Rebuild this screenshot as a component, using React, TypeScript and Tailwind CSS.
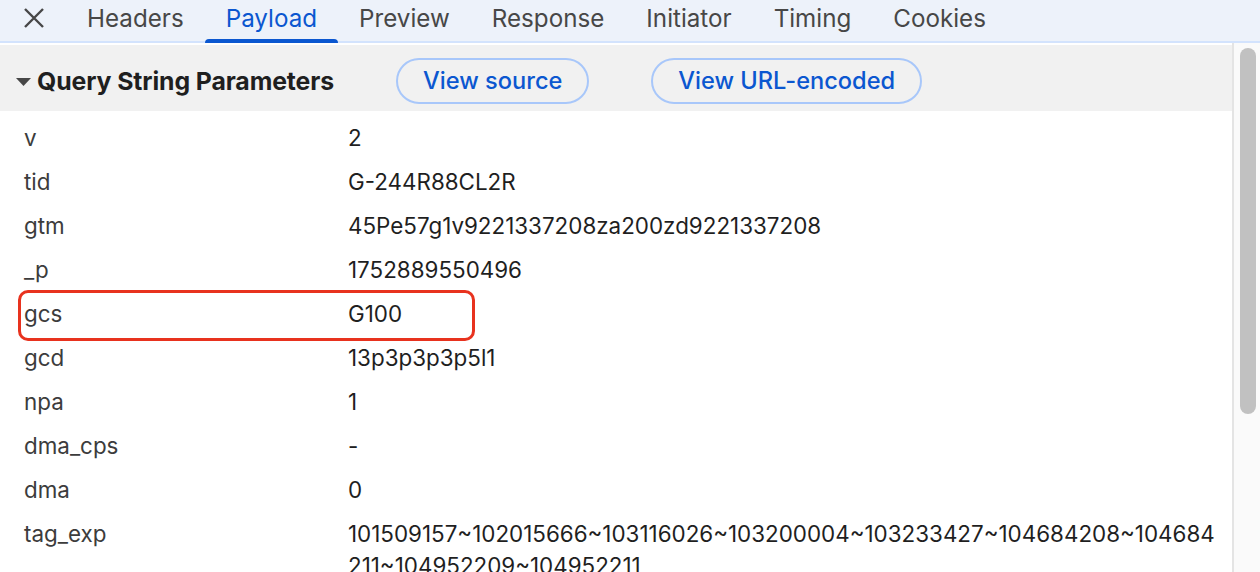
import React from "react";

const tabs = ["Headers", "Payload", "Preview", "Response", "Initiator", "Timing", "Cookies"];

const rows: [string, string][] = [
  ["v", "2"],
  ["tid", "G-244R88CL2R"],
  ["gtm", "45Pe57g1v9221337208za200zd9221337208"],
  ["_p", "1752889550496"],
  ["gcs", "G100"],
  ["gcd", "13p3p3p3p5l1"],
  ["npa", "1"],
  ["dma_cps", "-"],
  ["dma", "0"],
  ["tag_exp", "101509157~102015666~103116026~103200004~103233427~104684208~104684211~104952209~104952211"],
];

export default function App() {
  return (
    <div
      className="relative w-[1260px] h-[572px] overflow-hidden bg-white"
      style={{ fontFamily: "Inter, 'Noto Sans', 'Liberation Sans', sans-serif" }}
    >
      {/* Tab bar */}
      <div className="flex h-[43px] bg-[#edf2fa] border-b-2 border-[#d3e3fd]">
        <div className="w-[66px] flex items-start justify-center pt-[5px] pr-[1px]">
          <svg width="26" height="26" viewBox="0 0 26 26" className="ml-[2px]">
            <path d="M4 4 L22 22 M22 4 L4 22" stroke="#474747" strokeWidth="2.4" strokeLinecap="butt" />
          </svg>
        </div>
        {tabs.map((t) => {
          const active = t === "Payload";
          return (
            <div
              key={t}
              className={`relative px-[21px] h-[41px] flex items-start pt-[3px] text-[24.2px] leading-[32px] ${
                active ? "text-[#0b57d0]" : "text-[#474747]"
              }`}
            >
              {t}
              {active && (
                <div className="absolute left-0 right-0 bottom-[-2px] h-[4px] bg-[#0b57d0] rounded-t-[4px]" />
              )}
            </div>
          );
        })}
      </div>

      <div className="flex h-[529px]">
        {/* Main content */}
        <div className="flex-1 flex flex-col min-w-0">
          <div className="mt-[2px] h-[66px] pt-[6px] bg-[#f1f1f1] flex items-center shrink-0">
            <svg width="16" height="10" viewBox="0 0 16 10" className="ml-[16px] mr-[5px] mt-[1px]">
              <path d="M0 1 L15 1 L7.5 9 Z" fill="#474747" />
            </svg>
            <div className="text-[24.8px] font-bold text-[#1f1f1f] leading-[30px] tracking-[-0.1px]">Query String Parameters</div>
            <div className="ml-[62px] h-[46px] px-[25px] rounded-full border-2 border-[#a8c7fa] flex items-center text-[23.6px] text-[#0b57d0] font-medium">
              View source
            </div>
            <div className="ml-[62px] h-[46px] px-[25px] rounded-full border-2 border-[#a8c7fa] flex items-center text-[23.6px] text-[#0b57d0] font-medium">
              View URL-encoded
            </div>
          </div>
          <div className="pt-[5px]">
            {rows.map(([k, v]) => (
              <div key={k} className="flex py-[6px] text-[22.4px] leading-[32px]">
                <div className="w-[348px] pl-[24px] shrink-0 text-[#3c3c3c]">{k}</div>
                <div className="w-[880px] text-[#1f1f1f] break-all">{v}</div>
              </div>
            ))}
          </div>
        </div>

        {/* Scrollbar */}
        <div className="w-[28px] flex shrink-0">
          <div className="w-[2px] bg-[#e4e4e4]" />
          <div className="flex-1 bg-[#fafafa] pt-[5px] pl-[6px] pr-[4px]">
            <div className="h-[366px] w-[16px] rounded-full bg-[#c1c1c1]" />
          </div>
        </div>
      </div>

      {/* Highlight annotation */}
      <div className="absolute left-[18px] top-[290px] w-[457px] h-[51px] border-[3.5px] border-[#e8321e] rounded-[10px]" />
    </div>
  );
}
